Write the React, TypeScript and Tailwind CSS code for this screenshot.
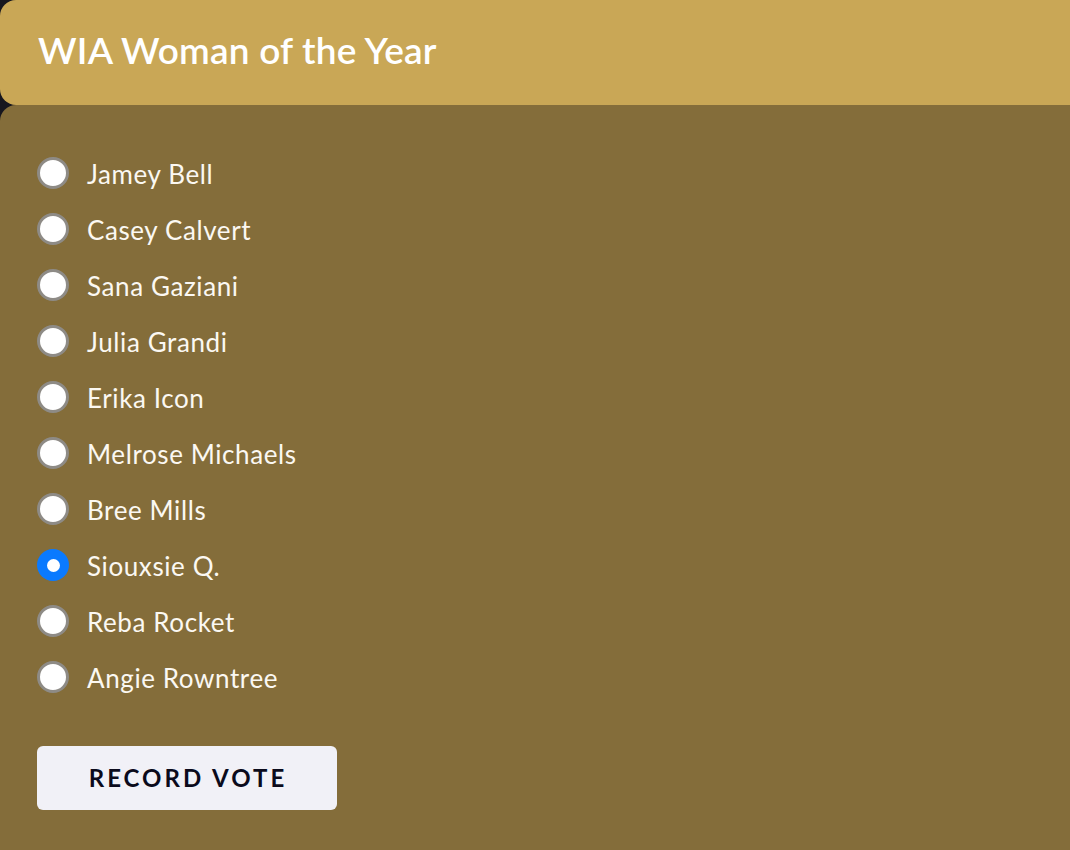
import React, { useState } from "react";

const names = [
  "Jamey Bell",
  "Casey Calvert",
  "Sana Gaziani",
  "Julia Grandi",
  "Erika Icon",
  "Melrose Michaels",
  "Bree Mills",
  "Siouxsie Q.",
  "Reba Rocket",
  "Angie Rowntree",
];

export default function App() {
  const [sel, setSel] = useState(7);
  return (
    <div
      className="w-[1070px] h-[850px] overflow-hidden bg-[#16161e]"
      style={{ fontFamily: "Lato, 'Open Sans', sans-serif" }}
    >
      <div className="w-[1110px] h-[900px] flex flex-col">
        <div className="h-[105px] shrink-0 rounded-[16px] bg-[#c9a756] px-[38px] flex items-center">
          <h1 className="text-[37px] font-semibold text-white leading-none tracking-[0.2px] mt-[-6px]">
            WIA Woman of the Year
          </h1>
        </div>
        <div className="flex-1 rounded-[16px] bg-[#846d3a] px-[37px] pt-[40px]">
          <div className="flex flex-col">
            {names.map((n, i) => (
              <label
                key={n}
                className="h-[56px] flex items-center gap-[18px] cursor-pointer"
                onClick={() => setSel(i)}
              >
                {sel === i ? (
                  <span className="w-[32px] h-[32px] rounded-full bg-[#0a7aff] flex items-center justify-center shrink-0">
                    <span className="w-[13px] h-[13px] rounded-full bg-white" />
                  </span>
                ) : (
                  <span className="w-[32px] h-[32px] rounded-full bg-white border-[3px] border-[#8e8b86] shrink-0" />
                )}
                <span className="text-[26px] text-[#fbf8f2] leading-none tracking-[0.6px] mt-[2px]">{n}</span>
              </label>
            ))}
          </div>
          <button className="mt-[41px] w-[300px] h-[64px] rounded-[6px] bg-[#f1f1f7] text-[#0b0b1c] text-[24px] font-bold tracking-[3px] pl-[2px]">
            RECORD VOTE
          </button>
        </div>
      </div>
    </div>
  );
}
